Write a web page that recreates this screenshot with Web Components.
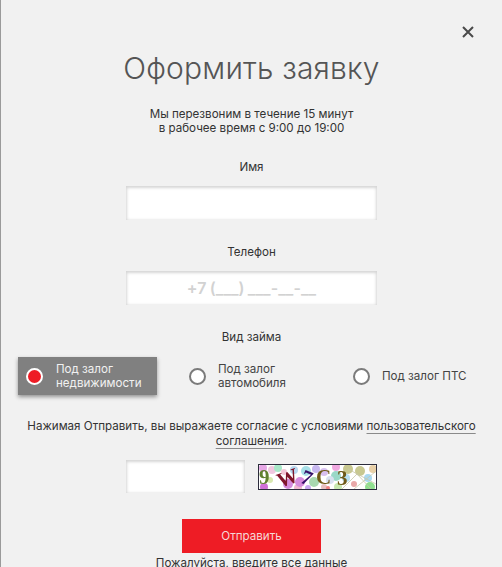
<!DOCTYPE html>
<html lang="ru">
<head>
<meta charset="utf-8">
<title>Оформить заявку</title>
<style>
    html, body { margin: 0; height: 100%; overflow: hidden; background: #f1f1f1; }
</style>
</head>
<body>
<request-form>
    <form-field label="Имя"></form-field>
    <form-field label="Телефон" placeholder="+7 (___) ___-__-__"></form-field>
</request-form>
<script>
class FormField extends HTMLElement {
    constructor() {
        super();
        const label = this.getAttribute('label');
        const placeholder = this.getAttribute('placeholder') || '';
        this.attachShadow({ mode: 'open' }).innerHTML = `
            <style>
                :host { display: flex; flex-direction: column; align-items: center; }
                label { font-size: 11.6px; line-height: 16px; color: #333; margin-bottom: 11px; }
                .input {
                    box-sizing: border-box;
                    width: 251px;
                    height: 34px;
                    background: #fff;
                    box-shadow: inset 0 1px 3px 1px #d6d6d6;
                    color: #d2d2d2;
                    font-size: 16px;
                    font-weight: 600;
                    line-height: 35px;
                    text-align: center;
                    word-spacing: -1px;
                    letter-spacing: .1px;
                }
            </style>
            <label>${label}</label>
            <div class="input">${placeholder}</div>
        `;
    }
}
customElements.define('form-field', FormField);

class LoanOption extends HTMLElement {
    constructor() {
        super();
        this.attachShadow({ mode: 'open' }).innerHTML = `
            <style>
                :host {
                    display: flex;
                    align-items: center;
                    box-sizing: border-box;
                    height: 38px;
                    font-size: 11.6px;
                    line-height: 14px;
                    color: #444;
                }
                :host([selected]) {
                    background: #808080;
                    color: #f1f1f1;
                    box-shadow: 0 2px 4px rgba(0, 0, 0, 0.4);
                }
                i {
                    flex: none;
                    box-sizing: border-box;
                    width: 17px;
                    height: 17px;
                    margin: 0 12px 0 8px;
                    border-radius: 50%;
                    border: 2px solid #7b7b7b;
                    background: #fff;
                }
                :host([selected]) i { border-color: #fff; background: #ee1c25; margin-right: 13px; }
            </style>
            <i></i><span><slot></slot></span>
        `;
    }
}
customElements.define('loan-option', LoanOption);

class CaptchaImage extends HTMLElement {
    constructor() {
        super();
        const dots = [
            [5, 4, 4, '#e6a8e6'], [6, 23, 4, '#d070d8'], [14, 6, 4, '#f0c8e0'], [20, 4, 4, '#a8e8c8'], [30, 20, 5, '#d58bdc'],
            [26, 8, 3, '#f4c7d8'], [40, 24, 4, '#f0b8d0'], [42, 18, 5, '#d58bdc'], [48, 7, 5, '#a8e0e8'], [58, 5, 4, '#c8b8f0'],
            [56, 18, 5, '#a8d8b0'], [66, 8, 4, '#d8c0f0'], [66, 23, 3, '#e8c0c0'], [78, 12, 5, '#9ad8c8'], [80, 23, 4, '#c8e8b0'],
            [78, 3, 4, '#f0a8e0'], [90, 5, 5, '#c8c890'], [96, 20, 3, '#e8a8a8'], [88, 14, 4, '#b8e0f0'], [102, 7, 5, '#c8c890'],
            [110, 14, 4, '#a8d8f0'], [112, 23, 5, '#90e090'], [115, 5, 4, '#e8d0a8'], [70, 24, 2, '#f08080'], [36, 6, 4, '#b8d8f0'],
            [12, 16, 3, '#d8e8b0'], [50, 24, 3, '#c8a8f0'], [72, 16, 4, '#d8e0f0']
        ].map(([x, y, r, c]) => `<circle cx="${x}" cy="${y}" r="${r}" fill="${c}"/>`).join('');
        this.attachShadow({ mode: 'open' }).innerHTML = `
            <style>
                :host { display: block; width: 119px; height: 26px; }
                svg { display: block; }
                text { font-family: "Liberation Serif", serif; font-weight: 700; font-size: 21px; }
                g { filter: blur(.3px); }
            </style>
            <svg width="119" height="26" viewBox="0 0 119 26">
                <rect width="119" height="26" fill="#fff"/>
                <g>
                    ${dots}
                    <path d="M84 25 L99 10 L113 25 M90 5 L118 20 M96 25 L117 8" fill="none" stroke="#c8c8a8" stroke-width=".8"/>
                    <text x="1" y="20" fill="#5f8030">9</text>
                    <text x="19" y="21" fill="#80162c" transform="rotate(-20 29 14)">W</text>
                    <text x="43" y="21" fill="#35106a" transform="rotate(22 49 15)">7</text>
                    <text x="58" y="20" fill="#6f5a18">C</text>
                    <text x="79" y="21" fill="#6f5a18">3</text>
                </g>
                <rect x=".5" y=".5" width="118" height="25" fill="none" stroke="#2c2c3c"/>
            </svg>
        `;
    }
}
customElements.define('captcha-image', CaptchaImage);

class RequestForm extends HTMLElement {
    constructor() {
        super();
        this.attachShadow({ mode: 'open' }).innerHTML = `
            <style>
                :host {
                    display: block;
                    box-sizing: border-box;
                    position: relative;
                    height: 567px;
                    overflow: hidden;
                    padding-top: 46px;
                    border-left: 1px solid #9a9a9a;
                    background: #f1f1f1;
                    font-family: Inter, "Liberation Sans", sans-serif;
                    color: #333;
                    text-align: center;
                }
                .close { position: absolute; top: 25px; left: 460px; display: block; }
                h1 { margin: 0; font-size: 30px; line-height: 44px; font-weight: 300; color: #555; letter-spacing: .2px; }
                .hint { margin: 17px 0 24px; font-size: 11.6px; line-height: 14px; }
                .fields { display: flex; flex-direction: column; gap: 24px; margin-bottom: 24px; }
                .caption { font-size: 11.6px; line-height: 16px; margin-bottom: 12px; }
                .options { display: flex; align-items: center; text-align: left; padding-left: 17px; }
                loan-option:nth-child(1) { width: 139px; margin-right: 24px; }
                loan-option:nth-child(2) { width: 164px; }
                .terms { margin: 24px auto 0; width: 470px; font-size: 11.6px; line-height: 15px; color: #333; }
                .terms a { color: inherit; text-decoration: underline; text-decoration-color: #8a8a8a; text-underline-offset: 3px; }
                .captcha { display: flex; justify-content: center; gap: 13px; align-items: flex-start; margin-top: 11px; }
                .captcha div {
                    box-sizing: border-box;
                    width: 119px;
                    height: 33px;
                    background: #fff;
                    box-shadow: inset 0 1px 3px 1px #d6d6d6;
                }
                captcha-image { margin-top: 4px; }
                button {
                    display: block;
                    width: 139px;
                    height: 34px;
                    margin: 26px auto 2px;
                    border: 0;
                    background: #ee1c25;
                    color: #f6d6d6;
                    font: inherit;
                    font-size: 11.6px;
                }
                .status { font-size: 11.6px; line-height: 16px; }
            </style>
            <svg class="close" width="14" height="14" viewBox="0 0 14 14">
                <path d="M2 2 L12 12 M12 2 L2 12" stroke="#4a4a4a" stroke-width="2" fill="none"/>
            </svg>
            <h1>Оформить заявку</h1>
            <p class="hint">Мы перезвоним в течение 15 минут<br>в рабочее время с 9:00 до 19:00</p>
            <div class="fields"><slot></slot></div>
            <div class="caption">Вид займа</div>
            <div class="options">
                <loan-option selected>Под залог<br>недвижимости</loan-option>
                <loan-option>Под залог<br>автомобиля</loan-option>
                <loan-option>Под залог ПТС</loan-option>
            </div>
            <p class="terms">Нажимая Отправить, вы выражаете согласие с условиями <a>пользовательского</a><br><a>соглашения</a>.</p>
            <div class="captcha"><div></div><captcha-image></captcha-image></div>
            <button type="button">Отправить</button>
            <div class="status">Пожалуйста, введите все данные</div>
        `;
    }
}
customElements.define('request-form', RequestForm);
</script>
</body>
</html>
